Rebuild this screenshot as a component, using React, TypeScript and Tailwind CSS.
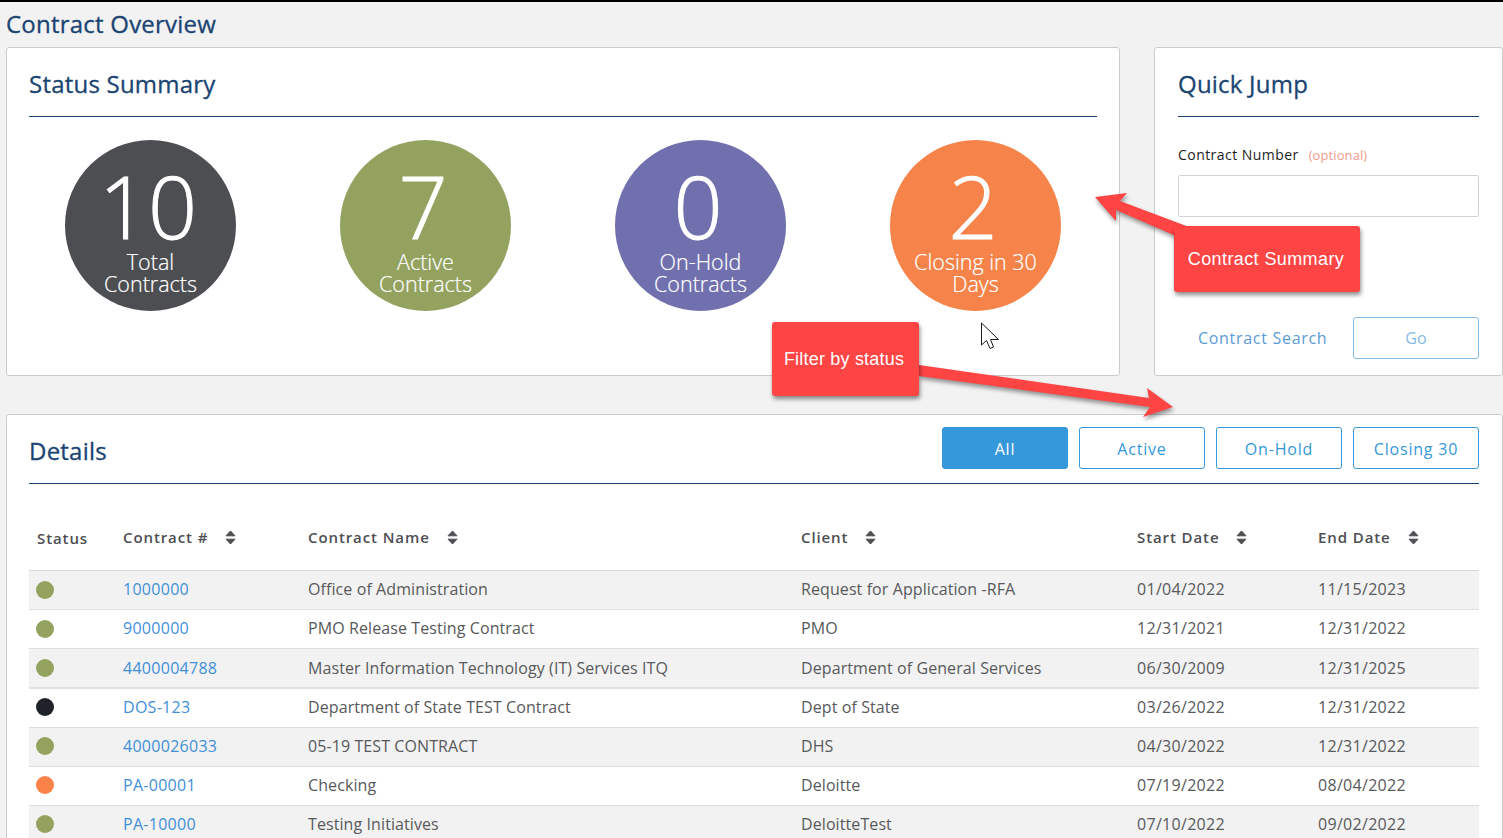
const stats = [
  { value: '10', label: ['Total', 'Contracts'], color: 'bg-[#4d4e52]' },
  { value: '7', label: ['Active', 'Contracts'], color: 'bg-[#93a25e]' },
  { value: '0', label: ['On-Hold', 'Contracts'], color: 'bg-[#7070ae]' },
  { value: '2', label: ['Closing in 30', 'Days'], color: 'bg-[#f6844a]' },
]

const filters = ['All', 'Active', 'On-Hold', 'Closing 30']

const rows = [
  { dot: 'bg-[#93a25e]', number: '1000000', name: 'Office of Administration', client: 'Request for Application -RFA', start: '01/04/2022', end: '11/15/2023' },
  { dot: 'bg-[#93a25e]', number: '9000000', name: 'PMO Release Testing Contract', client: 'PMO', start: '12/31/2021', end: '12/31/2022' },
  { dot: 'bg-[#93a25e]', number: '4400004788', name: 'Master Information Technology (IT) Services ITQ', client: 'Department of General Services', start: '06/30/2009', end: '12/31/2025' },
  { dot: 'bg-[#1f2329]', number: 'DOS-123', name: 'Department of State TEST Contract', client: 'Dept of State', start: '03/26/2022', end: '12/31/2022' },
  { dot: 'bg-[#93a25e]', number: '4000026033', name: '05-19 TEST CONTRACT', client: 'DHS', start: '04/30/2022', end: '12/31/2022' },
  { dot: 'bg-[#f98249]', number: 'PA-00001', name: 'Checking', client: 'Deloitte', start: '07/19/2022', end: '08/04/2022' },
  { dot: 'bg-[#93a25e]', number: 'PA-10000', name: 'Testing Initiatives', client: 'DeloitteTest', start: '07/10/2022', end: '09/02/2022' },
]

const columns = [
  { label: 'Contract #', width: 'w-[185px]' },
  { label: 'Contract Name', width: 'w-[493px]' },
  { label: 'Client', width: 'w-[336px]' },
  { label: 'Start Date', width: 'w-[181px]' },
  { label: 'End Date', width: 'flex-1' },
]

function SortIcon() {
  return (
    <svg width="11" height="15" viewBox="0 0 11 15" className="ml-[17px] shrink-0">
      <path d="M5.5 1 L10 5.8 H1 Z M1 9.2 H10 L5.5 14 Z" fill="#4d4e52" stroke="#4d4e52" strokeLinejoin="round" />
    </svg>
  )
}

function SectionTitle({ children }: { children: string }) {
  return (
    <h2 className="text-[24px] leading-[32px] font-normal tracking-[0.22px] text-[#1a4472] [-webkit-text-stroke:0.3px_#1a4472]">
      {children}
    </h2>
  )
}

function Annotations() {
  return (
    <div className="absolute -top-[2px] left-0">
      <svg width="1503" height="838" className="pointer-events-none absolute top-0 left-0 drop-shadow-[1px_3px_2px_rgba(0,0,0,0.4)]">
        <polygon fill="#ff4444" points="1095,197 1127,193 1120,201 1189,227 1176,236 1116,210 1116,221" />
        <polygon fill="#ff4444" points="919,365 1149,398 1147,388 1173,407 1143,417 1150,407 919,376" />
      </svg>
      <div className="absolute top-[226px] left-[1174px] flex h-[66px] w-[186px] items-center justify-center rounded-[3px] bg-[#ff4444] pr-[2px] font-['Liberation_Sans',sans-serif] text-[18px] tracking-[0.4px] text-white shadow-[1px_3px_4px_rgba(0,0,0,0.45)]">
        Contract Summary
      </div>
      <div className="absolute top-[322px] left-[772px] flex h-[74px] w-[147px] items-center justify-center rounded-[3px] bg-[#ff4444] pr-[3px] font-['Liberation_Sans',sans-serif] text-[18px] tracking-[0.2px] text-white shadow-[1px_3px_4px_rgba(0,0,0,0.45)]">
        Filter by status
      </div>
      <svg width="20" height="28" viewBox="0 0 20 28" className="absolute top-[322px] left-[980px]">
        <path d="M1.5 1 V23 L6.5 18.5 L10 26.5 L13.5 25 L10.5 17.5 H18.5 Z" fill="#fff" stroke="#1a1a1a" strokeWidth="1" strokeLinejoin="miter" />
      </svg>
    </div>
  )
}

export default function App() {
  return (
    <div className="relative h-[838px] w-[1503px] overflow-hidden border-t-2 border-black bg-[#f2f2f2] font-['Open_Sans',sans-serif]">
      <h1 className="ml-[6px] pt-[6px] pb-[1px] text-[24px] leading-[32px] font-normal tracking-[0.22px] text-[#1a4472] [-webkit-text-stroke:0.3px_#1a4472]">
        Contract Overview
      </h1>

      <div className="mt-[6px] ml-[6px] flex gap-[34px]">
        <section className="h-[329px] w-[1114px] rounded-[3px] border border-[#cccccc] bg-white px-[22px]">
          <div className="border-b border-[#1a4472] pt-[20px] pb-[16px]">
            <SectionTitle>Status Summary</SectionTitle>
          </div>
          <div className="mt-[23px] flex gap-[104px] pl-[36px]">
            {stats.map((stat) => (
              <div
                key={stat.value}
                className={`flex h-[171px] w-[171px] flex-col items-center rounded-full text-white ${stat.color}`}
              >
                <span className="mt-[21px] pr-[5px] text-[86px] leading-[90px] font-light [-webkit-text-stroke:1px_#ffffff]">
                  {stat.value}
                </span>
                <span className="text-center text-[21.5px] leading-[22px] font-light [-webkit-text-stroke:0.2px_#ffffff]">
                  {stat.label[0]}
                  <br />
                  {stat.label[1]}
                </span>
              </div>
            ))}
          </div>
        </section>

        <section className="h-[329px] flex-1 rounded-[3px] border border-[#cccccc] bg-white px-[23px]">
          <div className="border-b border-[#1a4472] pt-[20px] pb-[16px]">
            <SectionTitle>Quick Jump</SectionTitle>
          </div>
          <div className="mt-[29px] flex items-baseline gap-[10px] leading-[18px]">
            <span className="text-[14px] tracking-[0.45px] text-[#1d1d1d]">Contract Number</span>
            <span className="text-[13px] tracking-[0.1px] text-[#f29a8a]">(optional)</span>
          </div>
          <div className="mt-[11px] h-[42px] rounded-[2px] border border-[#ced4da] bg-white" />
          <div className="mt-[100px] flex items-center justify-between pl-[20px]">
            <span className="text-[16px] tracking-[0.7px] text-[#5b9bd5]">Contract Search</span>
            <button className="h-[42px] w-[126px] rounded-[3px] border border-[#85bde6] text-[16px] text-[#85bde6]">Go</button>
          </div>
        </section>
      </div>

      <section className="mt-[38px] ml-[6px] w-[1497px] rounded-[3px] border border-[#cccccc] bg-white pr-[23px] pl-[22px]">
        <div className="flex h-[69px] items-start justify-between border-b border-[#1a4472] pt-[12px]">
          <div className="pt-[8px]">
            <SectionTitle>Details</SectionTitle>
          </div>
          <div className="flex gap-[11px]">
            {filters.map((filter) => (
              <button
                key={filter}
                className={`h-[42px] w-[126px] rounded-[3px] border border-[#3498db] pt-[2px] text-[16px] tracking-[0.8px] ${
                  filter === 'All' ? 'bg-[#3498db] text-white' : 'bg-white text-[#3498db]'
                }`}
              >
                {filter}
              </button>
            ))}
          </div>
        </div>

        <div className="mt-[37px] flex h-[50px] items-start border-b border-[#d9d9d9] text-[15px] leading-[34px] font-semibold tracking-[0.9px] text-[#4d4e52]">
          <div className="w-[94px] pl-[8px]">Status</div>
          {columns.map((column) => (
            <div key={column.label} className={`flex items-center ${column.width}`}>
              <span className="leading-[32px]">{column.label}</span>
              <SortIcon />
            </div>
          ))}
        </div>

        {rows.map((row, i) => (
          <div
            key={row.number}
            className={`flex items-center text-[16px] leading-[36px] text-[#58595b] ${
              i === 2 ? 'h-[40px] border-b-2 border-[#dfe2e5]' : 'h-[39px] border-b border-[#dedede]'
            } ${i % 2 === 0 ? 'bg-[#f2f2f2]' : 'bg-white'} ${i > 2 ? 'pb-[2px]' : ''}`}
          >
            <div className="flex w-[94px] pl-[7px]">
              <span className={`h-[18px] w-[18px] rounded-full ${row.dot}`} />
            </div>
            <div className={`flex flex-1 ${i < 2 ? 'pb-[2px]' : ''}`}>
              <div className="w-[185px] tracking-[0.28px] text-[#3f8fd8]">{row.number}</div>
              <div className="w-[493px] tracking-[0.09px]">{row.name}</div>
              <div className="w-[336px] tracking-[0.09px]">{row.client}</div>
              <div className="w-[181px] tracking-[0.3px]">{row.start}</div>
              <div className="flex-1 tracking-[0.3px]">{row.end}</div>
            </div>
          </div>
        ))}
      </section>

      <Annotations />
    </div>
  )
}
